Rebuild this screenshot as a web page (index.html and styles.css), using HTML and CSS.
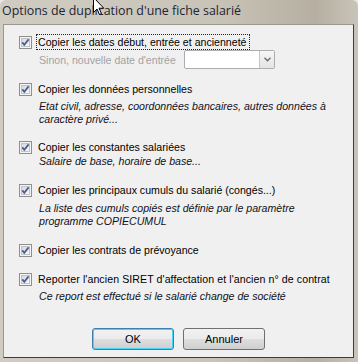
FILE: index.html
```html
<!DOCTYPE html>
<html lang="fr">
<head>
    <meta charset="UTF-8">
    <title>Options de duplication d'une fiche salarié</title>
    <link rel="stylesheet" href="styles.css">
</head>
<body>
    <div class="window">
        <div class="titlebar">
            <span class="title">Options de duplication d'une fiche salarié</span>
            <svg class="cursor" width="12" height="19" viewBox="0 0 12 19">
                <path d="M0.5 0.5 L0.5 15.5 L4 12 L6.5 17.5 L8.5 16.6 L6 11.2 L10.8 11.2 Z" fill="#fff" stroke="#000" stroke-width="1"/>
            </svg>
        </div>
        <div class="client">
            <div class="option opt1">
                <span class="box"><svg width="13" height="13" viewBox="0 0 13 13"><use href="#chk"/></svg></span>
                <span class="label focus">Copier les dates début, entrée et ancienneté</span>
            </div>
            <div class="date-row">
                <span class="date-label">Sinon, nouvelle date d'entrée</span>
                <div class="combo">
                    <div class="combo-field"></div>
                    <div class="combo-btn">
                        <svg width="7" height="5" viewBox="0 0 7 5"><path d="M0.5 0.8 L3.5 3.8 L6.5 0.8" fill="none" stroke="#6d6d6d" stroke-width="1.4"/></svg>
                    </div>
                </div>
            </div>

            <div class="option opt2">
                <span class="box"><svg width="13" height="13" viewBox="0 0 13 13"><use href="#chk"/></svg></span>
                <span class="label">Copier les données personnelles</span>
            </div>
            <p class="desc d2">Etat civil, adresse, coordonnées bancaires, autres données à<br>caractère privé...</p>

            <div class="option opt3">
                <span class="box"><svg width="13" height="13" viewBox="0 0 13 13"><use href="#chk"/></svg></span>
                <span class="label">Copier les constantes salariées</span>
            </div>
            <p class="desc d3">Salaire de base, horaire de base...</p>

            <div class="option opt4">
                <span class="box"><svg width="13" height="13" viewBox="0 0 13 13"><use href="#chk"/></svg></span>
                <span class="label">Copier les principaux cumuls du salarié (congés...)</span>
            </div>
            <p class="desc d4">La liste des cumuls copiés est définie par le paramètre<br>programme COPIECUMUL</p>

            <div class="option opt5">
                <span class="box"><svg width="13" height="13" viewBox="0 0 13 13"><use href="#chk"/></svg></span>
                <span class="label">Copier les contrats de prévoyance</span>
            </div>

            <div class="option opt6">
                <span class="box"><svg width="13" height="13" viewBox="0 0 13 13"><use href="#chk"/></svg></span>
                <span class="label wide">Reporter l'ancien SIRET d'affectation et l'ancien n° de contrat</span>
            </div>
            <p class="desc d6">Ce report est effectué si le salarié change de société</p>

            <div class="buttons">
                <button class="btn default">OK</button>
                <button class="btn">Annuler</button>
            </div>
        </div>
    </div>

    <svg width="0" height="0" class="defs">
        <defs>
            <linearGradient id="boxfill" x1="0" y1="0" x2="1" y2="1">
                <stop offset="0" stop-color="#d6d6d6"/>
                <stop offset="1" stop-color="#fbfbfb"/>
            </linearGradient>
            <g id="chk">
                <rect x="0.5" y="0.5" width="12" height="12" fill="#f4f4f4" stroke="#8e8f8f"/>
                <rect x="2.5" y="2.5" width="8" height="8" fill="url(#boxfill)" stroke="#c4c4c4"/>
                <path d="M3.3 6.4 L5.3 8.8 L9.6 3.4" fill="none" stroke="#4a5f97" stroke-width="1.8"/>
            </g>
        </defs>
    </svg>
</body>
</html>
```

FILE: styles.css
```css
body {
    margin: 0;
    background: #e9e7e2;
    font-family: 'Liberation Sans', Arial, sans-serif;
    font-size: 10.6px;
    color: #000;
}
.defs {
    position: absolute;
}
.window {
    width: 358px;
    height: 362px;
    box-sizing: border-box;
    background: linear-gradient(90deg, #d0ccc2 0%, #c9c4b8 60%, #b6afa1 88%, #c9c4b9 100%);
    border-radius: 6px 6px 0 0;
    padding: 0 4px 4px 3px;
    display: flex;
    flex-direction: column;
}
.titlebar {
    height: 24px;
    position: relative;
    flex-shrink: 0;
}
.title {
    display: block;
    margin-left: -1px;
    font-family: 'Open Sans', 'Noto Sans', sans-serif;
    font-size: 12.4px;
    line-height: 22px;
    color: #1c2433;
}
.cursor {
    position: absolute;
    left: 90px;
    top: -3px;
}
.client {
    flex: 1;
    background: #f0f0f0;
    border: 1px solid;
    border-color: #9b978e #3c3c3c #3c3c3c #9b978e;
    padding-left: 15px;
    display: flex;
    flex-direction: column;
}
.option {
    display: flex;
    align-items: center;
    height: 16px;
}
.box {
    width: 13px;
    height: 13px;
    display: block;
    margin-right: 4px;
}
.box svg {
    display: block;
}
.label {
    padding: 0 2px 0 1px;
    line-height: 14px;
    border: 1px solid transparent;
}
.label.focus {
    border: 1px dotted #222;
}
.label.wide {
    letter-spacing: 0.08px;
}
.opt1 { margin-top: 9px; }
.opt2 { margin-top: 12px; }
.opt3 { margin-top: 13px; }
.opt4 { margin-top: 14px; }
.opt5 { margin-top: 14px; }
.opt6 { margin-top: 13px; }
.date-row {
    display: flex;
    align-items: center;
    height: 19px;
    padding-left: 20px;
}
.date-label {
    width: 145px;
    color: #a3a3a3;
}
.combo {
    width: 91px;
    height: 19px;
    box-sizing: border-box;
    border: 1px solid #abadb3;
    background: #fff;
    display: flex;
    border-radius: 2px;
}
.combo-field {
    flex: 1;
}
.combo-btn {
    width: 14px;
    border-left: 1px solid #c5c5c5;
    background: linear-gradient(#f6f6f6, #e4e4e4);
    display: flex;
    align-items: center;
    justify-content: center;
}
.desc {
    margin: 0;
    padding-left: 20px;
    font-style: italic;
    line-height: 13px;
    color: #101020;
}
.d2 { margin-top: 3px; }
.d3 { margin-top: 0; }
.d4 { margin-top: 4px; }
.d6 { margin-top: 3px; }
.buttons {
    display: flex;
    justify-content: center;
    gap: 9px;
    margin-top: 25px;
    margin-left: -15px;
}
.btn {
    width: 82px;
    height: 22px;
    font-family: 'Liberation Sans', Arial, sans-serif;
    font-size: 11px;
    color: #000;
    border: 1px solid #707070;
    border-radius: 3px;
    background: linear-gradient(#f2f2f2 0%, #ebebeb 48%, #dddddd 52%, #cfcfcf 100%);
    padding: 0;
}
.btn.default {
    border-color: #3c7fb1;
    box-shadow: inset 0 0 0 1px #48d3f8;
}
```
